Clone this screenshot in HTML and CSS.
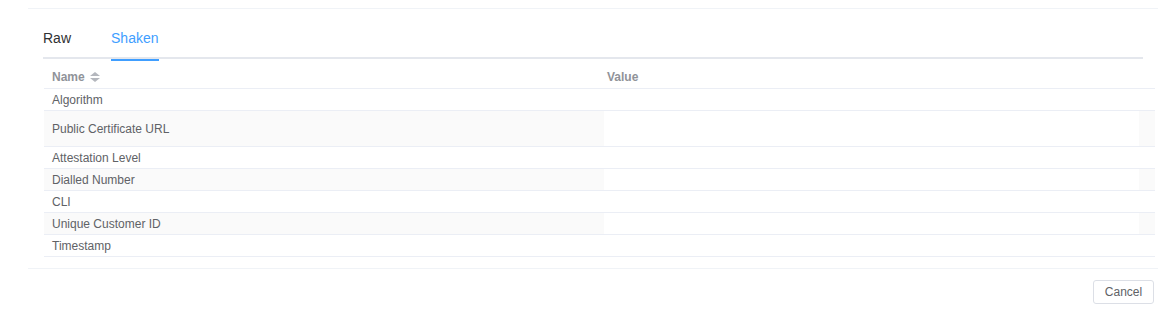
FILE: index.html
```html
<!DOCTYPE html>
<html>
<head>
<meta charset="utf-8">
<link rel="stylesheet" href="styles.css">
</head>
<body>
<div class="dialog">
  <div class="top-line"></div>
  <div class="content">
    <div class="tabs">
      <div class="tab">Raw</div>
      <div class="tab active">Shaken</div>
    </div>
    <div class="table">
      <div class="row head">
        <div class="cell name">Name <span class="sort"><span class="up"></span><span class="down"></span></span></div>
        <div class="cell value">Value</div>
      </div>
      <div class="row"><div class="cell name">Algorithm</div><div class="cell value"><div class="inner"></div></div></div>
      <div class="row striped tall"><div class="cell name">Public Certificate URL</div><div class="cell value"><div class="inner"></div></div></div>
      <div class="row"><div class="cell name">Attestation Level</div><div class="cell value"><div class="inner"></div></div></div>
      <div class="row striped"><div class="cell name">Dialled Number</div><div class="cell value"><div class="inner"></div></div></div>
      <div class="row"><div class="cell name">CLI</div><div class="cell value"><div class="inner"></div></div></div>
      <div class="row striped"><div class="cell name">Unique Customer ID</div><div class="cell value"><div class="inner"></div></div></div>
      <div class="row"><div class="cell name">Timestamp</div><div class="cell value"><div class="inner"></div></div></div>
    </div>
  </div>
  <div class="footer">
    <button class="btn">Cancel</button>
  </div>
</div>
</body>
</html>
```
FILE: styles.css
```css
* { box-sizing: border-box; }
html, body { margin: 0; padding: 0; background: #fff; }
body { font-family: "Liberation Sans", Arial, sans-serif; color: #606266; }

.dialog { width: 1130px; margin-left: 28px; padding-top: 8px; }
.top-line { height: 1px; background: #f0f3f7; }

.content { padding: 9px 15px 0 15px; }

.tabs { display: flex; border-bottom: 2px solid #e4e7ed; height: 41px; }
.tab { height: 41px; line-height: 40px; font-size: 14px; color: #303133; margin-right: 40px; position: relative; }
.tab.active { color: #409eff; }
.tab.active::after { content: ""; position: absolute; left: 0; right: 0; bottom: -2px; height: 2px; background: #409eff; }

.table { margin-left: 1px; width: 1111px; font-size: 12px; }
.row { display: flex; height: 22px; border-bottom: 1px solid #ebeef5; }
.row.tall { height: 36px; }
.row.head { height: 30px; border-bottom: 1px solid #ebeef5; }
.cell { display: flex; align-items: center; }
.cell.name { width: 560px; padding-left: 8px; color: #606266; }
.cell.value { flex: 1; padding-left: 0; }
.head .cell { font-weight: bold; color: #909399; padding-top: 7px; }
.head .cell.value { padding-left: 3px; }
.row.striped { background: #fafafa; }
.inner { width: 535px; height: 100%; background: #fff; }

.sort { display: inline-flex; flex-direction: column; margin-left: 5px; gap: 2px; }
.sort .up { width: 0; height: 0; border-left: 5px solid transparent; border-right: 5px solid transparent; border-bottom: 4px solid #b4b7bd; }
.sort .down { width: 0; height: 0; border-left: 5px solid transparent; border-right: 5px solid transparent; border-top: 4px solid #b4b7bd; }

.footer { border-top: 1px solid #f0f3f7; margin-top: 11px; padding-top: 11px; display: flex; justify-content: flex-end; padding-right: 4px; }
.btn { font-family: inherit; font-size: 12px; color: #606266; background: #fff; border: 1px solid #dcdfe6; border-radius: 3px; height: 24px; width: 61px; padding: 0; }
```
